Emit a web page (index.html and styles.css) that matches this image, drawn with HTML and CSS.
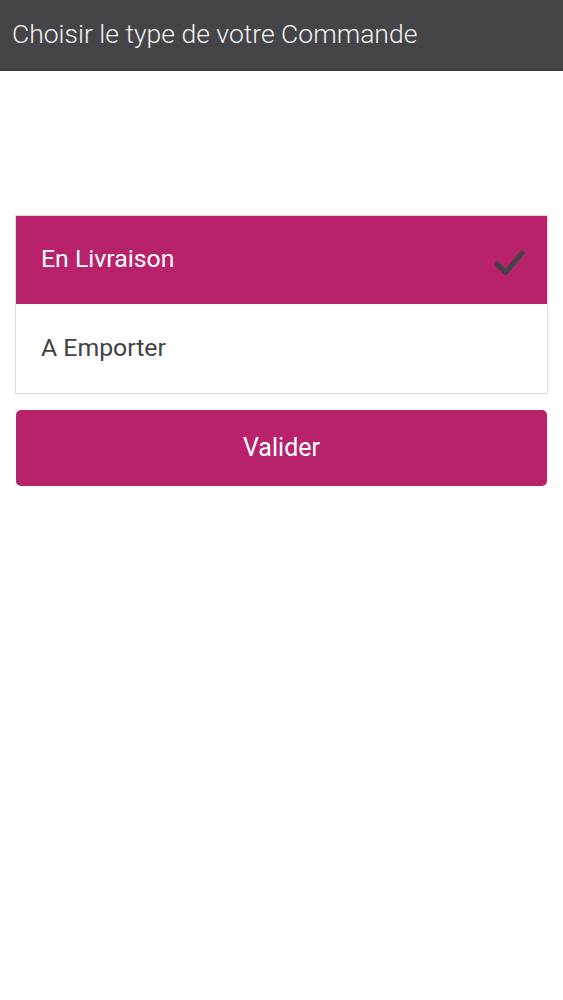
FILE: index.html
```html
<!DOCTYPE html>
<html lang="fr">
<head>
<meta charset="utf-8">
<title>Choisir le type de votre Commande</title>
<link rel="stylesheet" href="styles.css">
</head>
<body>
<header class="topbar">
  <h1 class="topbar-title">Choisir le type de votre Commande</h1>
</header>
<main class="content">
  <ul class="options">
    <li class="option option-selected">
      <span class="option-label">En Livraison</span>
      <svg class="check" width="34" height="30" viewBox="0 0 34 30" aria-hidden="true">
        <path d="M4 15 L12.5 23.5 L29 4" fill="none" stroke="#444247" stroke-width="5" stroke-linecap="round" stroke-linejoin="round"/>
      </svg>
    </li>
    <li class="option">
      <span class="option-label">A Emporter</span>
    </li>
  </ul>
  <button class="submit" type="button">Valider</button>
</main>
</body>
</html>
```
FILE: styles.css
```css
* { box-sizing: border-box; }
html, body { margin: 0; padding: 0; background: #ffffff; }
body { font-family: Roboto, "Liberation Sans", sans-serif; width: 563px; }

.topbar {
  height: 71px;
  background: #454447;
  border-bottom: 2px solid #3a393c;
  display: flex;
  align-items: center;
  padding: 0 12px;
}
.topbar-title {
  margin: 0 0 3px 0;
  font-weight: 300;
  font-size: 26.5px;
  color: #f2f2f2;
  letter-spacing: 0;
}

.content {
  padding: 144px 15px 0 15px;
  display: flex;
  flex-direction: column;
  gap: 16px;
}

.options {
  list-style: none;
  margin: 0;
  padding: 0;
  border: 1px solid #dcdcdc;
}
.option {
  height: 89px;
  display: flex;
  align-items: center;
  justify-content: space-between;
  padding: 0 20px 0 25px;
  background: #ffffff;
  color: #424145;
}
.option-selected {
  background: #b8226a;
  color: #ffffff;
  height: 88px;
}
.option-label {
  font-size: 24.8px;
  font-weight: 400;
  margin-top: -2px;
}
.option-selected .option-label { margin-top: -4px; }
.check { margin-top: 8px; }

.submit {
  margin: 0 1px;
  height: 76px;
  border: none;
  border-radius: 5px;
  background: #b8226a;
  color: #ffffff;
  font-family: Roboto, "Liberation Sans", sans-serif;
  font-size: 25px;
  font-weight: 400;
  padding: 0 0 2px 0;
}
```
